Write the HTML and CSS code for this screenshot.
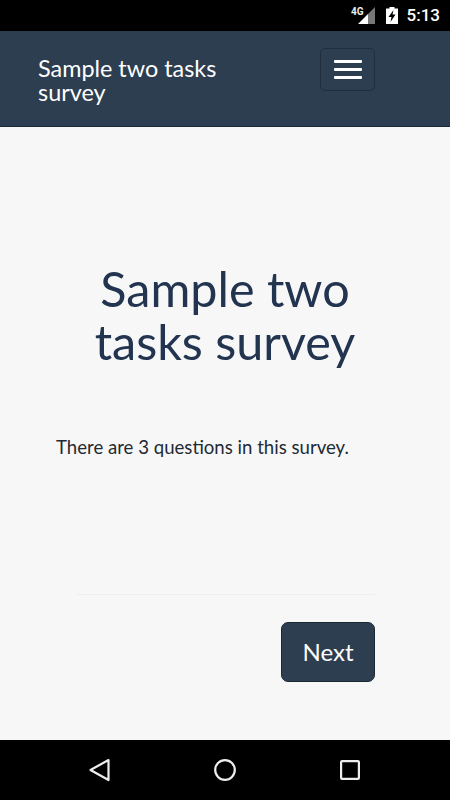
FILE: index.html
```html
<!DOCTYPE html>
<html lang="en">
<head>
<meta charset="utf-8">
<title>Sample two tasks survey</title>
<link rel="stylesheet" href="styles.css">
</head>
<body>
<div class="phone">
  <div class="status">
    <span class="net">4G</span>
    <svg class="signal" width="17" height="17" viewBox="0 0 17 17"><path d="M0 17L10 7V17Z" fill="#fff"/><path d="M10 7L17 0V17H10Z" fill="#777"/></svg>
    <svg class="battery" width="12" height="17" viewBox="0 0 12 17"><path d="M3.500 0H8.500V1.500H12V17H0V1.500H3.500Z" fill="#fff"/><path d="M7.500 3L2.500 10H5.500L4.500 15L9.500 7.500H6.500Z" fill="#000"/></svg>
    <span class="time">5:13</span>
  </div>
  <header class="navbar">
    <div class="brand">Sample two tasks survey</div>
    <button class="toggle" aria-label="Menu"><span></span><span></span><span></span></button>
  </header>
  <main class="content">
    <h1>Sample two tasks survey</h1>
    <p>There are 3 questions in this survey.</p>
    <hr>
    <div class="actions"><button class="next">Next</button></div>
  </main>
  <nav class="sysnav">
    <svg width="24" height="26" viewBox="0 0 24 26"><path d="M20.500 3L2.500 13L20.500 23Z" fill="none" stroke="#eee" stroke-width="2.200" stroke-linejoin="round"/></svg>
    <svg width="24" height="24" viewBox="0 0 24 24"><circle cx="12" cy="12" r="9.800" fill="none" stroke="#eee" stroke-width="2.200"/></svg>
    <svg width="24" height="24" viewBox="0 0 24 24"><rect x="3.100" y="3.100" width="17.800" height="17.800" rx="1" fill="none" stroke="#eee" stroke-width="2.200"/></svg>
  </nav>
</div>
</body>
</html>
```
FILE: styles.css
```css
* { box-sizing: border-box; }
html, body { margin: 0; padding: 0; }
body { font-family: Lato, "Open Sans", sans-serif; background: #000; }
.phone { width: 450px; height: 800px; display: flex; flex-direction: column; overflow: hidden; }
.status { height: 31px; flex: none; background: #000; color: #fff; display: flex; align-items: center; justify-content: flex-end; padding-right: 10px; font-family: Roboto, sans-serif; }
.net { font-size: 10px; font-weight: 700; margin-right: -6px; margin-top: -9px; position: relative; z-index: 1; color: #eee; }
.signal { margin-right: 11px; }
.battery { margin-right: 9px; }
.time { font-size: 17px; font-weight: 500; line-height: 1; }
.navbar { height: 96px; flex: none; background: #2c3e50; border-bottom: 1px solid #1c2a38; display: flex; align-items: flex-start; padding: 17px 75px 0 38px; justify-content: space-between; }
.brand { width: 200px; font-size: 23.400px; line-height: 24px; color: #fff; margin-top: 8px; }
.toggle { width: 55px; height: 43px; background: transparent; border: 1px solid #1f2e3e; border-radius: 5px; padding: 0; display: flex; flex-direction: column; align-items: center; justify-content: center; gap: 5px; }
.toggle span { display: block; width: 28px; height: 3px; background: #fff; border-radius: 1px; }
.content { flex: 1; background: #f7f7f7; padding: 135px 75px 0 56px; color: #222; display: flex; flex-direction: column; }
h1 { margin: 0 -19px 0 0; font-size: 48.500px; line-height: 53px; font-weight: 400; color: #22344f; text-align: center; }
p { margin: 66px 0 0; font-size: 18.600px; line-height: 26px; color: #1f2a33; white-space: nowrap; }
hr { width: 298px; margin: 134px 0 0 21px; border: 0; border-top: 1px solid #eeeeee; height: 0; }
.actions { display: flex; justify-content: flex-end; margin-top: 27px; }
.next { width: 94px; height: 60px; background: #2c3e50; color: #fff; border: 1px solid #1c2a38; border-radius: 7px; font: 400 24px Lato, sans-serif; padding: 0 0 2px; }
.sysnav { height: 60px; flex: none; background: #000; display: flex; align-items: center; justify-content: space-between; padding: 0 88px; }
```
